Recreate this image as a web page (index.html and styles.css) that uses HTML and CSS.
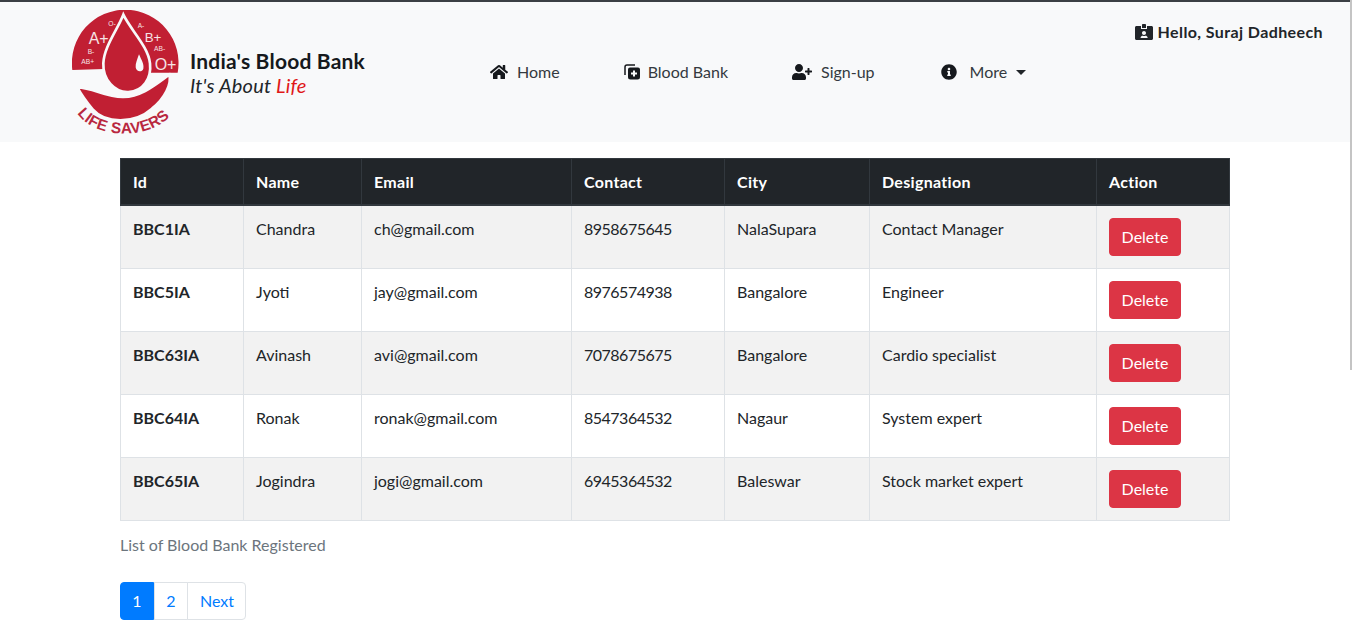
FILE: index.html
```html
<html>
    <head>
        <title>India's Blood Bank</title>
        <link rel="stylesheet" href="styles.css">
    </head>
    <body class="body">
        <header class="navbar">
            <div class="brand">
                <svg class="logo" viewBox="36 30 324 378">
                    <path class="red" d="M37 210A160 160 0 1 1 353 218L270 218L132 207Z"/>
                    <path class="red stroke-bg" d="M190 44C172 90 132 140 130 190C128 240 165 278 205 276C250 274 275 235 270 190C265 140 212 90 190 44Z"/>
                    <path class="bg" d="M237 163C232 178 226 190 227 202C229 216 246 218 250 206C253 192 243 178 237 163Z"/>
                    <path class="red stroke-bg" d="M52 262C100 262 135 292 190 291C245 290 285 255 328 224C336 252 314 296 276 326C224 372 136 372 98 328C78 304 64 284 52 262Z"/>
                    <text class="blood big" x="86" y="132">A+</text>
                    <text class="blood mid" x="254" y="126">B+</text>
                    <text class="blood big" x="284" y="210">O+</text>
                    <text class="blood small" x="145" y="79">O-</text>
                    <text class="blood small" x="233" y="85">A-</text>
                    <text class="blood small" x="83" y="163">B-</text>
                    <text class="blood small" x="64" y="193">AB+</text>
                    <text class="blood small" x="282" y="153">AB-</text>
                    <path id="life-curve" class="none" d="M52 340C105 420 285 425 345 330"/>
                    <text class="life"><textPath href="#life-curve">LIFE SAVERS</textPath></text>
                </svg>
                <div class="brand-text">
                    <div class="brand-name">India's Blood Bank</div>
                    <div class="tagline">It's About <span class="life-word">Life</span></div>
                </div>
            </div>
            <nav class="nav">
                <a class="nav-link">
                    <svg class="icon home-icon" viewBox="0 0 576 512"><path d="M280.37 148.26L96 300.11V464a16 16 0 0 0 16 16l112.06-.29a16 16 0 0 0 15.92-16V368a16 16 0 0 1 16-16h64a16 16 0 0 1 16 16v95.64a16 16 0 0 0 16 16.05L464 480a16 16 0 0 0 16-16V300L295.67 148.26a12.19 12.19 0 0 0-15.3 0zM571.6 251.47L488 182.56V44.05a12 12 0 0 0-12-12h-56a12 12 0 0 0-12 12v72.61L318.47 43a48 48 0 0 0-61 0L4.34 251.47a12 12 0 0 0-1.6 16.9l25.5 31A12 12 0 0 0 45.15 301l235.22-193.74a12.19 12.19 0 0 1 15.3 0L530.9 301a12 12 0 0 0 16.9-1.6l25.5-31a12 12 0 0 0-1.7-16.93z"/></svg>
                    Home
                </a>
                <a class="nav-link">
                    <svg class="icon bank-icon" viewBox="0 0 16 16"><path class="bank-back" d="M1 11V3a2 2 0 0 1 2-2h8"/><path d="M6 3.5h8a2 2 0 0 1 2 2V13a2.500 2.500 0 0 1-2.500 2.500h-7A2.500 2.500 0 0 1 4 13V5.500a2 2 0 0 1 2-2z"/><path class="bg" d="M9 6.500h2v2h2v2h-2v2H9v-2H7v-2h2z"/></svg>
                    Blood Bank
                </a>
                <a class="nav-link">
                    <svg class="icon user-icon" viewBox="0 0 640 512"><path d="M624 208h-64v-64c0-8.800-7.200-16-16-16h-32c-8.800 0-16 7.200-16 16v64h-64c-8.800 0-16 7.200-16 16v32c0 8.800 7.200 16 16 16h64v64c0 8.800 7.200 16 16 16h32c8.800 0 16-7.200 16-16v-64h64c8.800 0 16-7.200 16-16v-32c0-8.800-7.200-16-16-16zm-400 48c70.700 0 128-57.300 128-128S294.700 0 224 0 96 57.300 96 128s57.300 128 128 128zm89.600 32h-16.700c-22.200 10.200-46.900 16-72.900 16s-50.600-5.800-72.900-16h-16.700C60.200 288 0 348.200 0 422.400V464c0 26.500 21.500 48 48 48h352c26.500 0 48-21.500 48-48v-41.600c0-74.200-60.200-134.400-134.400-134.400z"/></svg>
                    Sign-up
                </a>
                <a class="nav-link">
                    <svg class="icon info-icon" viewBox="0 0 512 512"><path d="M256 8C119.043 8 8 119.083 8 256c0 136.997 111.043 248 248 248s248-111.003 248-248C504 119.083 392.957 8 256 8zm0 110c23.196 0 42 18.804 42 42s-18.804 42-42 42-42-18.804-42-42 18.804-42 42-42zm56 254c0 6.627-5.373 12-12 12h-88c-6.627 0-12-5.373-12-12v-24c0-6.627 5.373-12 12-12h12v-64h-12c-6.627 0-12-5.373-12-12v-24c0-6.627 5.373-12 12-12h64c6.627 0 12 5.373 12 12v100h12c6.627 0 12 5.373 12 12v24z"/></svg>
                    More
                    <span class="caret"></span>
                </a>
            </nav>
            <div class="user">
                <svg class="id-icon" viewBox="0 0 576 512"><path d="M528 64H384v96H192V64H48C21.500 64 0 85.500 0 112v352c0 26.500 21.500 48 48 48h480c26.500 0 48-21.500 48-48V112c0-26.500-21.500-48-48-48zM288 224c35.300 0 64 28.700 64 64s-28.700 64-64 64-64-28.700-64-64 28.700-64 64-64zm93.300 224H194.700c-10.400 0-18.800-10-15.600-19.800 9.500-28.800 36.500-50.200 68.800-50.200h4.100c12.300 5.100 25.700 8 39.800 8s27.600-2.900 39.800-8h4.100c32 0 59.200 21.200 68.800 50.200 3.200 9.800-5.200 19.800-15.600 19.800zM352 32c0-17.700-14.300-32-32-32h-64c-17.700 0-32 14.300-32 32v96h128V32z"/></svg>
                Hello, Suraj Dadheech
            </div>
        </header>

        <main class="main">
            <table class="table">
                <caption class="caption">List of Blood Bank Registered</caption>
                <colgroup>
                    <col class="col-id"><col class="col-name"><col class="col-email"><col class="col-contact"><col class="col-city"><col class="col-desig"><col class="col-action">
                </colgroup>
                <thead>
                    <tr><th>Id</th><th>Name</th><th>Email</th><th>Contact</th><th>City</th><th>Designation</th><th>Action</th></tr>
                </thead>
                <tbody>
                    <tr><th>BBC1IA</th><td>Chandra</td><td>ch@gmail.com</td><td class="phone">8958675645</td><td>NalaSupara</td><td>Contact Manager</td><td><button class="btn-delete">Delete</button></td></tr>
                    <tr><th>BBC5IA</th><td>Jyoti</td><td>jay@gmail.com</td><td class="phone">8976574938</td><td>Bangalore</td><td>Engineer</td><td><button class="btn-delete">Delete</button></td></tr>
                    <tr><th>BBC63IA</th><td>Avinash</td><td>avi@gmail.com</td><td class="phone">7078675675</td><td>Bangalore</td><td>Cardio specialist</td><td><button class="btn-delete">Delete</button></td></tr>
                    <tr><th>BBC64IA</th><td>Ronak</td><td>ronak@gmail.com</td><td class="phone">8547364532</td><td>Nagaur</td><td>System expert</td><td><button class="btn-delete">Delete</button></td></tr>
                    <tr><th>BBC65IA</th><td>Jogindra</td><td>jogi@gmail.com</td><td class="phone">6945364532</td><td>Baleswar</td><td>Stock market expert</td><td><button class="btn-delete">Delete</button></td></tr>
                </tbody>
            </table>
            <div class="pagination">
                <a class="page-link page-num active">1</a>
                <a class="page-link page-num">2</a>
                <a class="page-link page-next">Next</a>
            </div>
        </main>
        <div class="scroll-edge"></div>
    </body>
</html>
```

FILE: styles.css
```css
html{
    overflow: hidden;
}
.body{
    margin: 0;
    width: 1350px;
    font-family: "Lato", "Open Sans", sans-serif;
    font-size: 16px;
    line-height: 24px;
    color: #212529;
    background-color: white;
}
.scroll-edge{
    position: fixed;
    top: 0;
    right: 0;
    width: 2px;
    height: 370px;
    background-color: #c4c4c4;
}

/* top bar */
.navbar{
    display: flex;
    align-items: center;
    width: 1352px;
    padding-left: 72px;
    background-color: #f8f9fa;
    border-top: 2px solid #3b3f44;
    box-sizing: border-box;
    height: 142px;
}
.brand{
    display: flex;
    align-items: center;
    gap: 10px;
    width: 418px;
    flex-shrink: 0;
    margin-top: 2px;
}
.logo{
    width: 108px;
    height: 126px;
    flex-shrink: 0;
}
.red{
    fill: #c11f33;
}
.stroke-bg{
    stroke: #f8f9fa;
    stroke-width: 8px;
}
.bg{
    fill: #f8f9fa;
}
.none{
    fill: none;
}
.blood{
    fill: #f6e3e5;
    font-family: "Liberation Sans", sans-serif;
}
.big{
    font-size: 48px;
}
.mid{
    font-size: 40px;
}
.small{
    font-size: 20px;
}
.life{
    fill: #b9283f;
    font-family: "Liberation Sans", sans-serif;
    font-size: 46px;
    font-weight: bold;
    letter-spacing: 1px;
}
.brand-text{
    margin-bottom: 1px;
}
.brand-name{
    font-size: 21px;
    line-height: 25px;
    font-weight: bold;
    letter-spacing: 0.2px;
    color: #16191d;
}
.tagline{
    font-size: 20px;
    line-height: 24px;
    font-style: italic;
    letter-spacing: 0.2px;
}
.life-word{
    color: #e01818;
}
.nav{
    display: flex;
    align-items: center;
    gap: 64px;
}
.nav-link{
    display: flex;
    align-items: center;
    color: #343a40;
}
.icon{
    fill: #16191d;
    height: 16px;
    flex-shrink: 0;
}
.home-icon{
    width: 18px;
    margin-right: 9px;
}
.bank-icon{
    width: 16px;
    margin-right: 8px;
}
.bank-back{
    fill: none;
    stroke: #16191d;
    stroke-width: 1.500px;
}
.user-icon{
    width: 20px;
    margin-right: 9px;
}
.info-icon{
    width: 16px;
    margin-left: 2px;
    margin-right: 13px;
}
.caret{
    width: 0;
    height: 0;
    margin-left: 9px;
    border-top: 5px solid #212529;
    border-left: 5px solid transparent;
    border-right: 5px solid transparent;
}
.user{
    display: flex;
    align-items: center;
    margin-left: auto;
    margin-right: 29px;
    align-self: flex-start;
    margin-top: 18px;
    font-weight: bold;
    letter-spacing: 0.4px;
    white-space: nowrap;
}
.id-icon{
    width: 18px;
    height: 16px;
    margin-right: 5px;
    fill: #212529;
}

/* table */
.main{
    width: 1110px;
    margin-left: 120px;
    padding-top: 16px;
}
.table{
    width: 1109px;
    table-layout: fixed;
    border-collapse: collapse;
    margin-bottom: 16px;
}
.caption{
    caption-side: bottom;
    text-align: left;
    padding: 14px 0 12px;
    color: #6c757d;
}
.col-id{ width: 123px; }
.col-name{ width: 118px; }
.col-email{ width: 210px; }
.col-contact{ width: 153px; }
.col-city{ width: 145px; }
.col-desig{ width: 227px; }
.col-action{ width: 133px; }
th,td{
    padding: 13px 12px 12px;
    text-align: left;
    vertical-align: top;
    border: 1px solid #dee2e6;
}
thead th{
    padding: 13px 12px;
    color: white;
    letter-spacing: 0.3px;
    background-color: #212529;
    border-color: #32383e;
    border-bottom-width: 2px;
}
tbody tr:nth-child(odd){
    background-color: #f2f2f2;
}
.phone{
    letter-spacing: -0.5px;
}
.btn-delete{
    display: block;
    height: 38px;
    width: 72px;
    padding: 0 0 2px;
    margin-top: -1px;
    font: inherit;
    color: white;
    background-color: #dc3545;
    border: 1px solid #dc3545;
    border-radius: 4px;
}

/* pagination */
.pagination{
    display: flex;
}
.page-link{
    height: 38px;
    box-sizing: border-box;
    color: #007bff;
    background-color: white;
    border: 1px solid #dee2e6;
}
.page-num{
    width: 34px;
    padding: 6px 0;
    text-align: center;
}
.page-next{
    padding: 6px 11px 6px 12px;
    margin-left: -1px;
}
.page-link:first-child{
    border-radius: 4px 0 0 4px;
}
.page-link:last-child{
    border-radius: 0 4px 4px 0;
}
.active{
    color: white;
    background-color: #007bff;
    border-color: #007bff;
}
```
